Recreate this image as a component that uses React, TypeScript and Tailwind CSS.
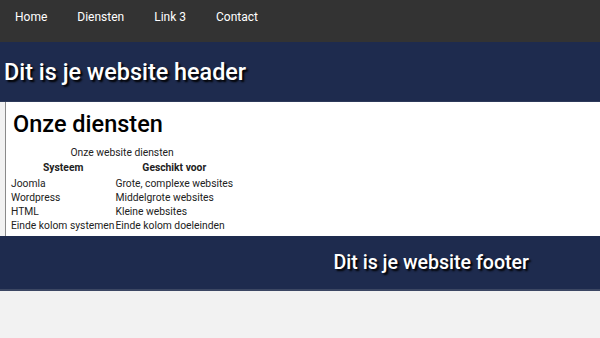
import React from 'react';

const links = ['Home', 'Diensten', 'Link 3', 'Contact'];

const rows: [string, string][] = [
    ['Joomla', 'Grote, complexe websites'],
    ['Wordpress', 'Middelgrote websites'],
    ['HTML', 'Kleine websites'],
    ['Einde kolom systemen', 'Einde kolom doeleinden'],
];

const App: React.FC = () => {
    return (
        <div className="min-h-[338px] bg-[#f2f2f2] font-['Roboto',sans-serif]">
            {/* Nav */}
            <nav className="h-[42px] bg-[#333333] flex items-start pt-[10px]">
                {links.map((l) => (
                    <a key={l} href="#" className="px-[15px] text-[12px] leading-[14px] text-white">
                        {l}
                    </a>
                ))}
            </nav>

            {/* Header */}
            <header className="h-[60px] bg-[#1e2b4e] flex items-center px-[4px] border-b border-[#2d3a5a]">
                <h1 className="text-[23.4px] font-medium text-white [text-shadow:2px_2px_2px_#000] mt-[2px]">
                    Dit is je website header
                </h1>
            </header>

            {/* Main */}
            <main className="flex bg-white h-[134px]">
                <div className="w-[6px] bg-[#f2f2f2] border-r border-[#8a8a8a]" />
                <section className="pl-[4px] pt-[8px]">
                    <h2 className="text-[23.5px] font-medium text-black leading-[28px] pl-[3px] mb-[8px]">Onze diensten</h2>
                    <table className="ml-[1px] text-[10.3px] text-[#222] leading-[14px] border-collapse">
                        <caption className="text-[10.3px] pb-[1px]">Onze website diensten</caption>
                        <thead>
                            <tr>
                                <th className="font-bold px-0 pb-[2px]">Systeem</th>
                                <th className="font-bold px-0 pb-[2px]">Geschikt voor</th>
                            </tr>
                        </thead>
                        <tbody>
                            {rows.map(([a, b]) => (
                                <tr key={a}>
                                    <td className="p-0 pr-[1px]">{a}</td>
                                    <td className="p-0">{b}</td>
                                </tr>
                            ))}
                        </tbody>
                    </table>
                </section>
            </main>

            {/* Footer */}
            <footer className="h-[55px] bg-[#1e2b4e] flex items-center justify-end pr-[71px] border-b-2 border-b-[#3c4763]">
                <p className="text-[19.6px] font-medium text-white [text-shadow:2px_2px_2px_#000] mt-[1px]">
                    Dit is je website footer
                </p>
            </footer>
        </div>
    );
};

export default App;
